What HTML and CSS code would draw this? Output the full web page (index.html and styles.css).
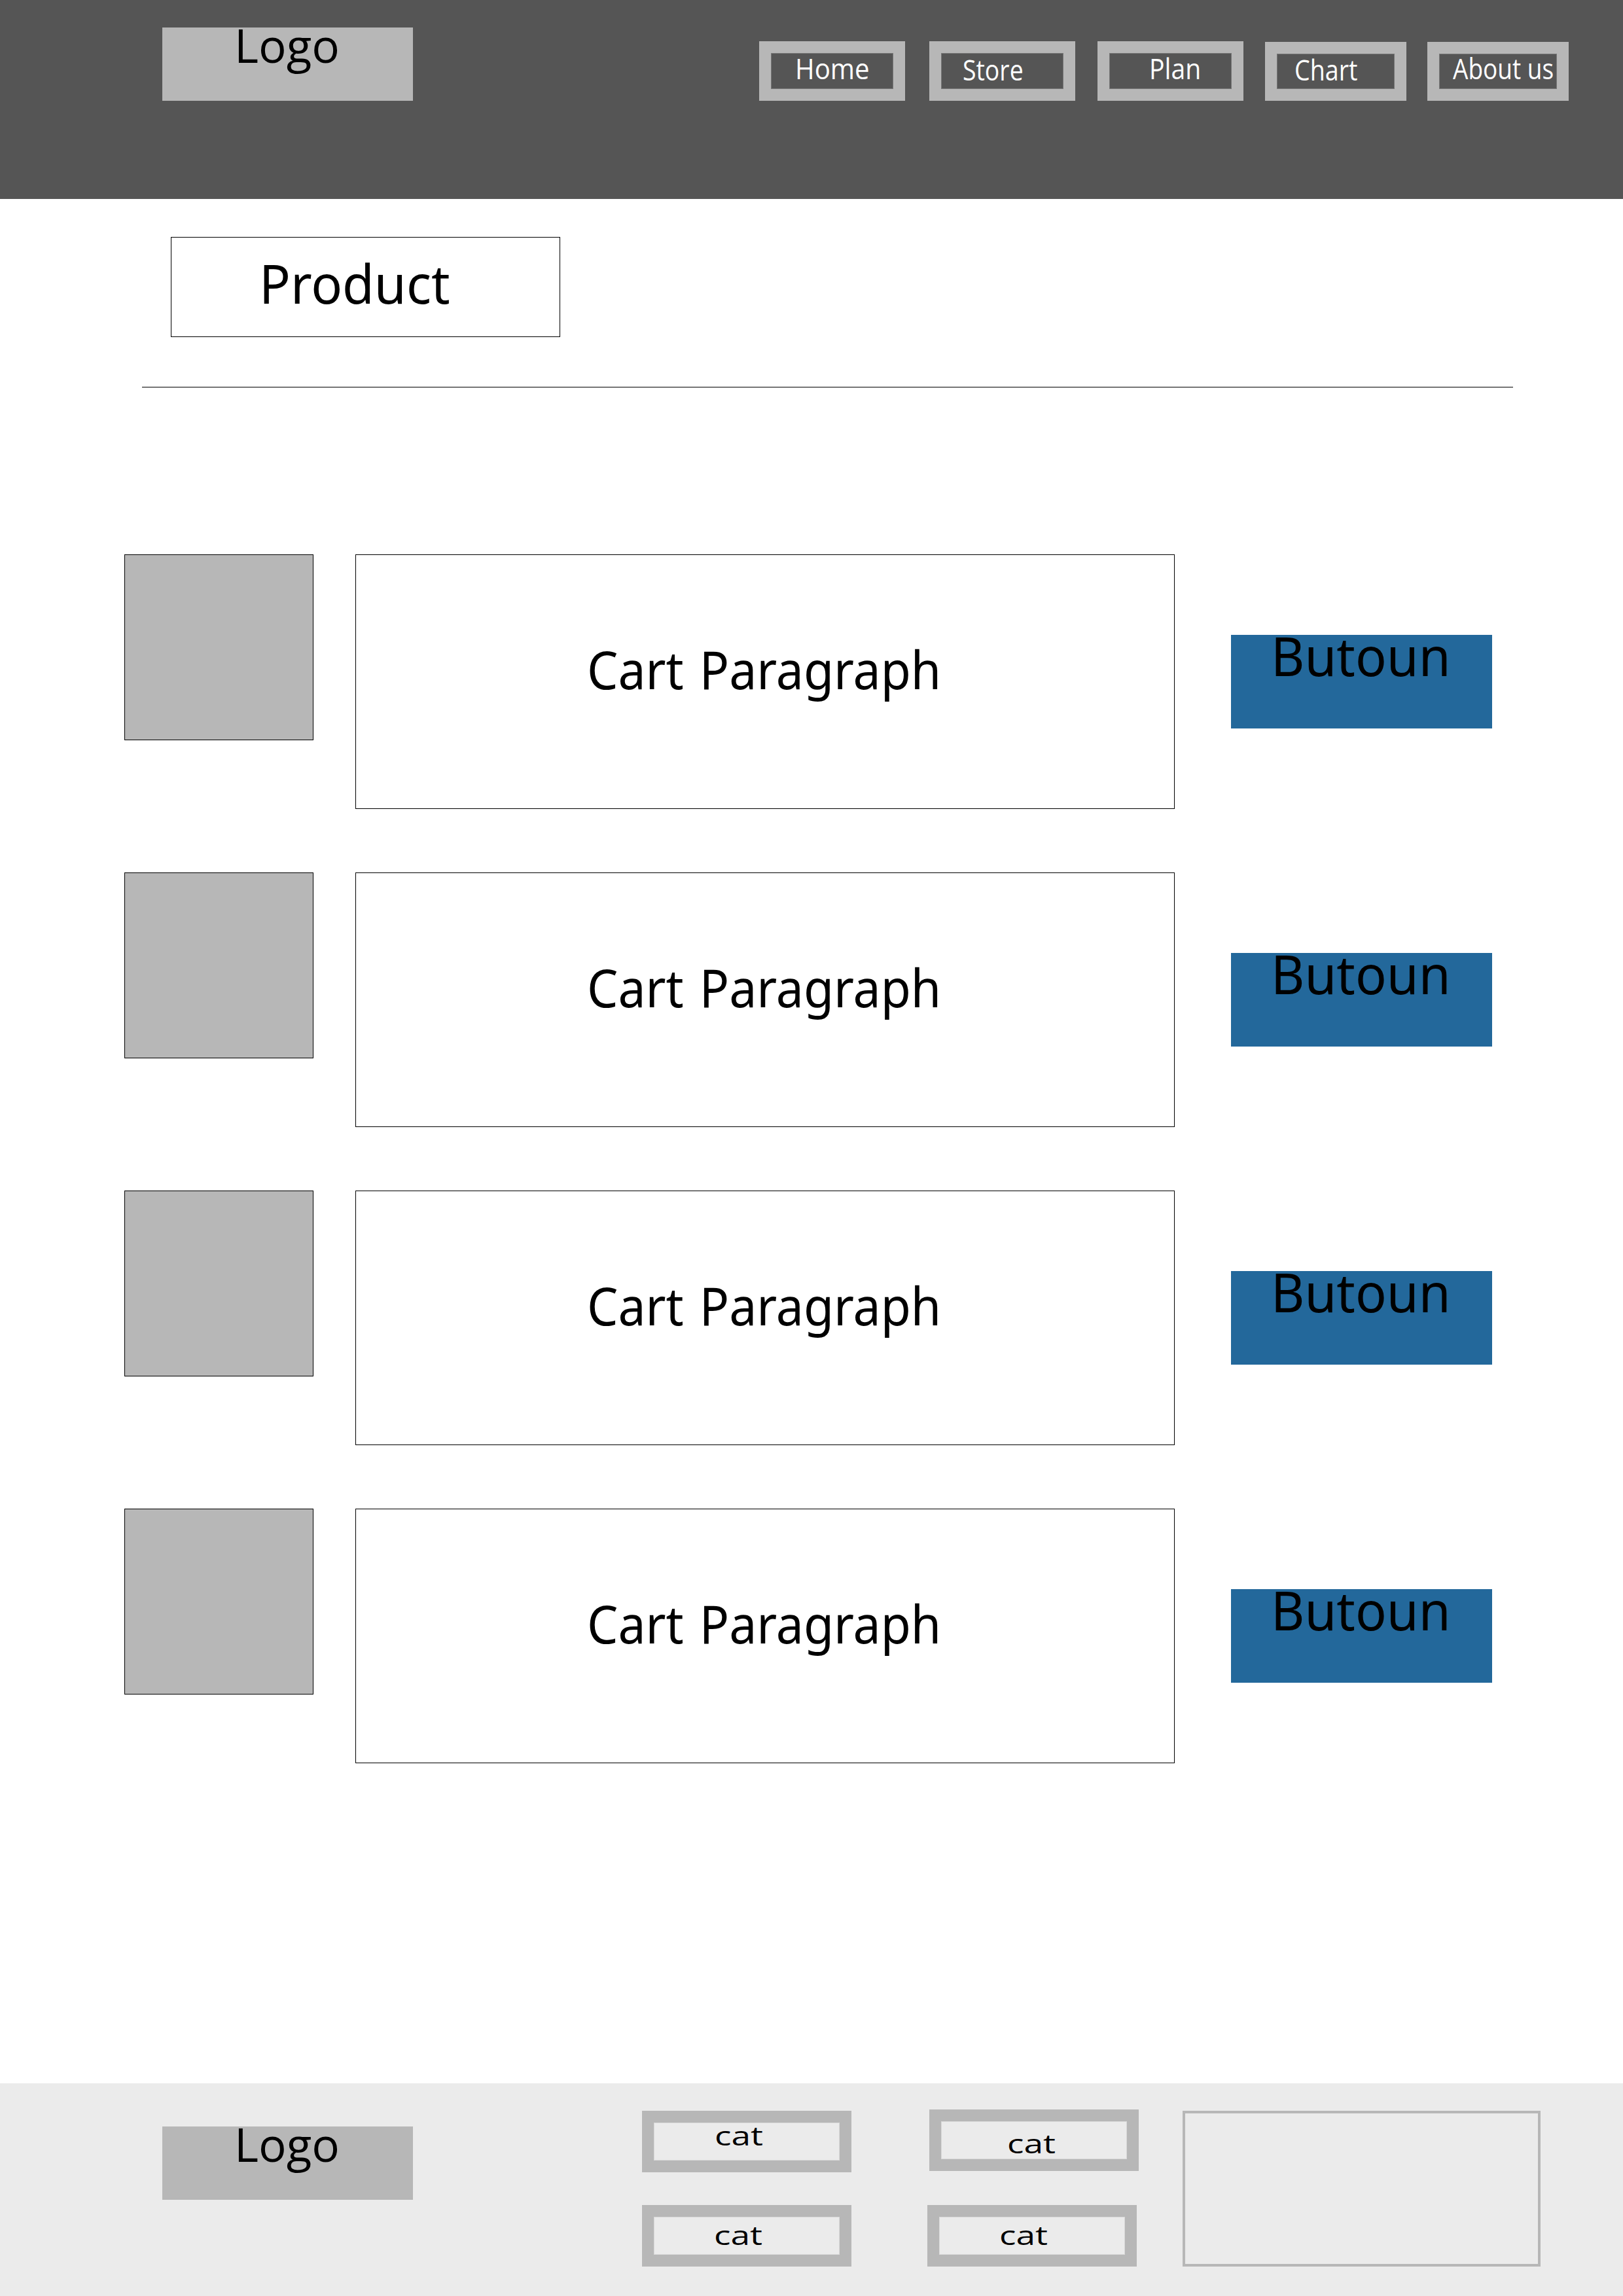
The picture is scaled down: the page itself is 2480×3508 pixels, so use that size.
FILE: index.html
```html
<!DOCTYPE html>
<html lang="en">
<head>
<meta charset="utf-8">
<title>Product</title>
<link rel="stylesheet" href="styles.css">
</head>
<body>
<header class="header">
  <div class="logo"><span class="label">Logo</span></div>
  <nav class="nav">
    <a class="nav-item home"><span class="label">Home</span></a>
    <a class="nav-item store"><span class="label">Store</span></a>
    <a class="nav-item plan"><span class="label">Plan</span></a>
    <a class="nav-item chart"><span class="label">Chart</span></a>
    <a class="nav-item about"><span class="label">About us</span></a>
  </nav>
</header>
<main class="main">
  <h1 class="title"><span class="label">Product</span></h1>
  <hr class="rule">
  <section class="list">
    <article class="row">
      <div class="thumb"></div>
      <div class="card"><span class="label">Cart Paragraph</span></div>
      <div class="button"><span class="label">Butoun</span></div>
    </article>
    <article class="row">
      <div class="thumb"></div>
      <div class="card"><span class="label">Cart Paragraph</span></div>
      <div class="button"><span class="label">Butoun</span></div>
    </article>
    <article class="row">
      <div class="thumb"></div>
      <div class="card"><span class="label">Cart Paragraph</span></div>
      <div class="button"><span class="label">Butoun</span></div>
    </article>
    <article class="row">
      <div class="thumb"></div>
      <div class="card"><span class="label">Cart Paragraph</span></div>
      <div class="button"><span class="label">Butoun</span></div>
    </article>
  </section>
</main>
<footer class="footer">
  <div class="logo"><span class="label">Logo</span></div>
  <div class="cats first">
    <a class="cat upper"><span class="label">cat</span></a>
    <a class="cat"><span class="label">cat</span></a>
  </div>
  <div class="cats second">
    <a class="cat upper"><span class="label">cat</span></a>
    <a class="cat"><span class="label">cat</span></a>
  </div>
  <div class="panel"></div>
</footer>
</body>
</html>
```
FILE: styles.css
```css
* { box-sizing: border-box; }

body {
  margin: 0;
  width: 2480px;
  height: 3508px;
  display: flex;
  flex-direction: column;
  background: #fff;
  color: #000;
  font-family: "Noto Sans", "Open Sans", sans-serif;
}

.label {
  display: block;
  width: max-content;
  line-height: 1;
  white-space: nowrap;
  transform-origin: 0 0;
}

/* Header */
.header {
  display: flex;
  align-items: flex-start;
  height: 304px;
  padding: 42px 83px 0 248px;
  background: #555;
}

.logo {
  flex: none;
  width: 383px;
  height: 112px;
  padding-left: 110px;
  background: #b7b7b7;
  font-family: "Open Sans", sans-serif;
  font-size: 72px;
}
.logo .label { margin-top: -10px; transform: scaleX(.985); }

.nav {
  display: flex;
  align-items: flex-end;
  margin: 21px 0 0 529px;
  color: #fff;
  font-family: "Open Sans", sans-serif;
  font-size: 43px;
}

.nav-item {
  width: 223px;
  height: 91px;
  border: 18px solid #b7b7b7;
  box-shadow: inset 0 0 0 1px #777;
}
.home { padding: 2px 0 0 37px; }
.store { margin-left: 37px; padding: 4px 0 0 33px; }
.plan { margin-left: 34px; padding: 2px 0 0 61px; }
.chart { width: 216px; height: 90px; margin-left: 33px; padding: 3px 0 0 27px; }
.about { width: 216px; height: 90px; margin-left: 32px; padding: 1px 0 0 21px; }
.home .label { transform: scaleX(.935); }
.store .label { transform: scaleX(.87); }
.plan .label { transform: scaleX(.91); }
.chart .label { transform: scaleX(.875); }
.about .label { transform: scaleX(.86); }

/* Product list */
.main {
  flex: 1;
  padding-top: 58px;
}

.title {
  width: 595px;
  height: 153px;
  margin: 0 0 0 261px;
  padding: 28px 0 0 134px;
  border: 1px solid #000;
  font-size: 82px;
  font-weight: 400;
}
.title .label { transform: scaleX(.967); }

.rule {
  width: 2095px;
  height: 1px;
  margin: 76px 0 0 217px;
  border: 0;
  background: #000;
}

.list {
  display: flex;
  flex-direction: column;
  gap: 97px;
  padding: 255px 0 0 190px;
}

.row {
  display: flex;
  align-items: flex-start;
  height: 389px;
}

.thumb {
  width: 289px;
  height: 284px;
  background: #b7b7b7;
  border: 1px solid #000;
}

.card {
  width: 1252px;
  height: 389px;
  margin-left: 64px;
  padding: 134px 0 0 353px;
  border: 1px solid #000;
  font-size: 80px;
  word-spacing: 5px;
}
.card .label { transform: scaleX(.938); }

.button {
  width: 399px;
  height: 143px;
  margin: 123px 0 0 86px;
  padding-left: 61px;
  background: #23689b;
  font-size: 82px;
}
.button .label { margin-top: -10px; transform: scaleX(.965); }

/* Footer */
.footer {
  display: flex;
  align-items: flex-start;
  height: 325px;
  background: #ebebeb;
}
.footer .logo { margin: 66px 0 0 248px; }

.cats {
  display: flex;
  flex-direction: column;
  font-family: "Open Sans", sans-serif;
  font-size: 40px;
}
.cats.first { gap: 50px; margin: 42px 0 0 350px; }
.cats.second { gap: 52px; margin: 40px 0 0 116px; }

.cat {
  width: 320px;
  height: 94px;
  padding: 8px 0 0 92px;
  border: 18px solid #b7b7b7;
  box-shadow: inset 0 0 0 1px #d9d9d9;
}
.cat .label { transform: scaleX(1.33); }
.first .upper { padding: 0 0 0 93px; }
.second .upper { margin-left: 3px; padding: 14px 0 0 101px; }

.panel {
  width: 547px;
  height: 238px;
  margin: 42px 0 0 67px;
  border: 4px solid #b7b7b7;
}
```
